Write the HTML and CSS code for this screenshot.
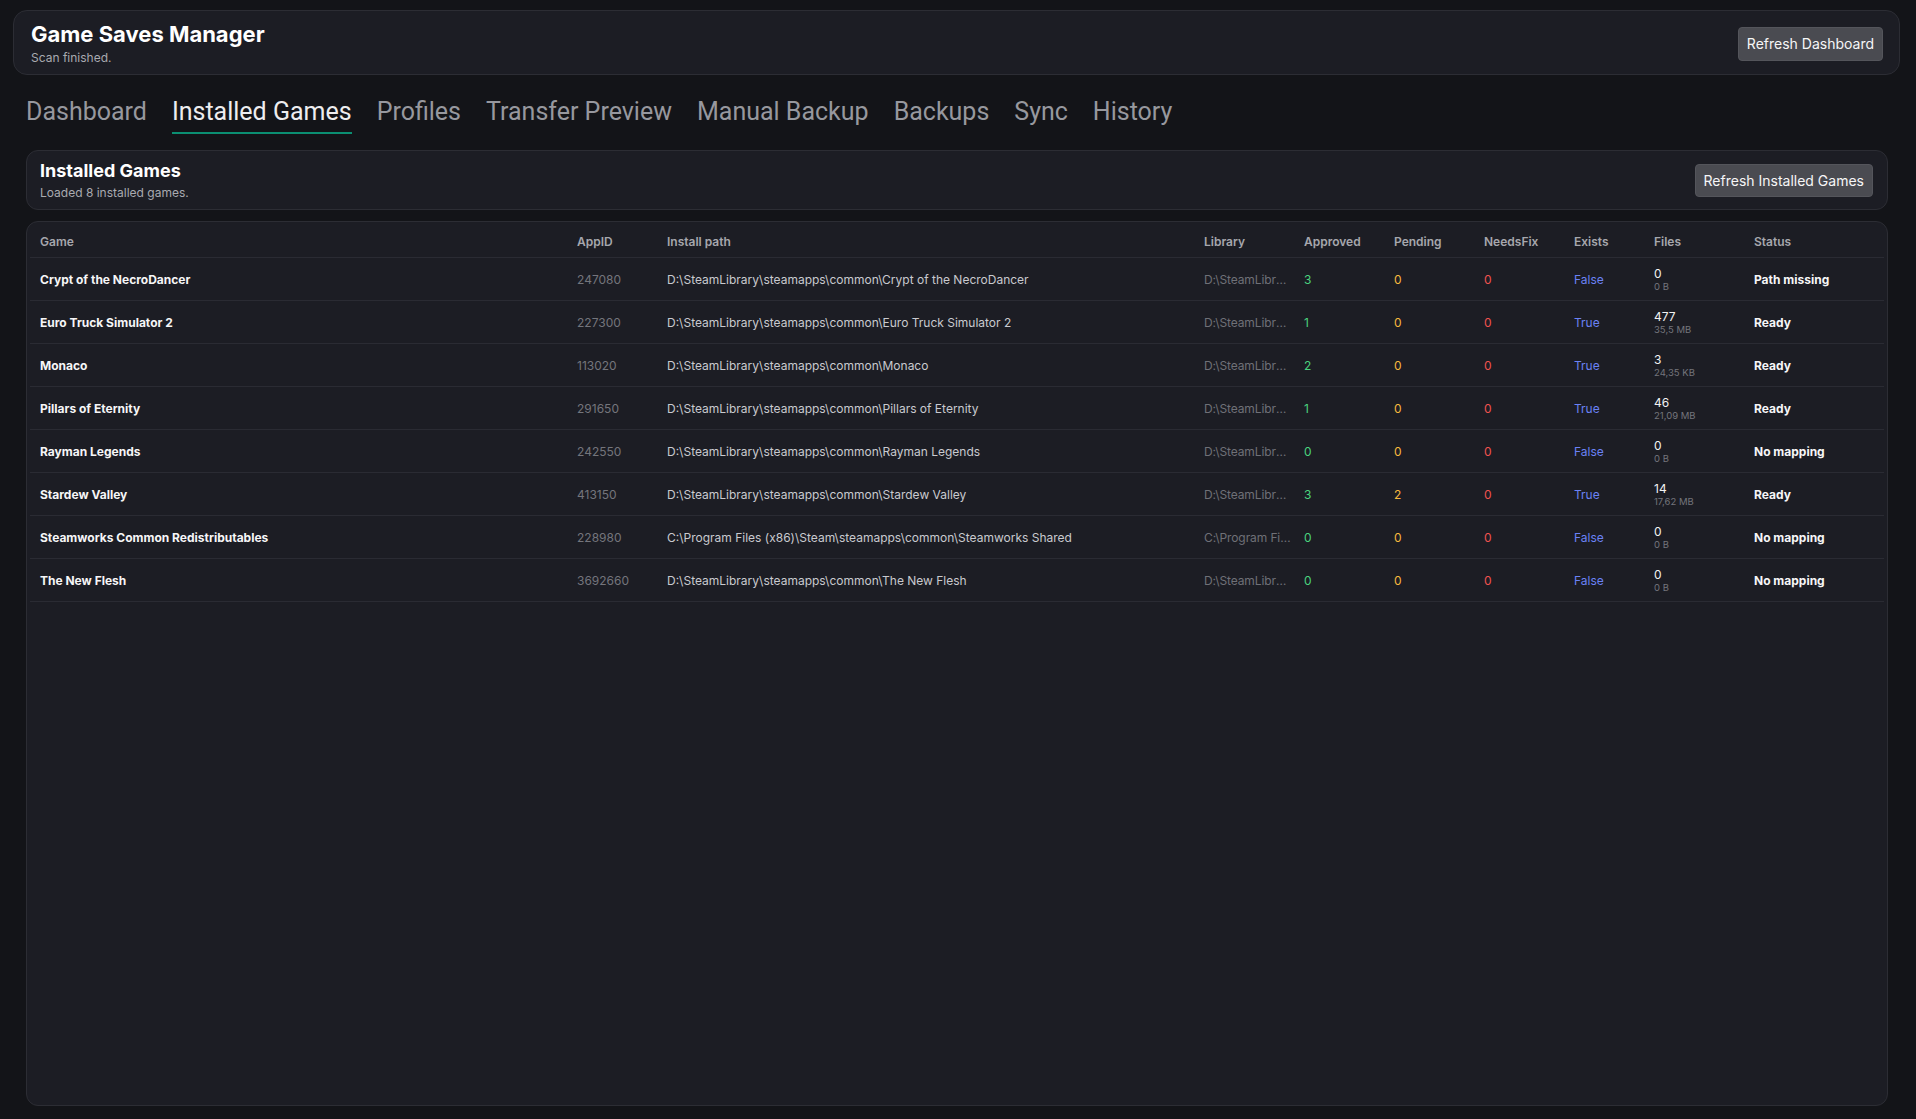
FILE: index.html
```html
<!DOCTYPE html>
<html>
<head>
    <title>Game Saves Manager</title>
    <link rel="stylesheet" href="styles.css">
</head>
<body>
    <div class="app">
        <header class="topbar">
            <div>
                <h1>Game Saves Manager</h1>
                <div class="status">Scan finished.</div>
            </div>
            <button class="btn">Refresh Dashboard</button>
        </header>

        <main class="main">
            <nav class="tabs">
                <a class="tab">Dashboard</a>
                <a class="tab active">Installed Games</a>
                <a class="tab">Profiles</a>
                <a class="tab">Transfer Preview</a>
                <a class="tab">Manual Backup</a>
                <a class="tab">Backups</a>
                <a class="tab">Sync</a>
                <a class="tab">History</a>
            </nav>

            <section class="card panel-head">
                <div>
                    <h2>Installed Games</h2>
                    <div class="status">Loaded 8 installed games.</div>
                </div>
                <button class="btn">Refresh Installed Games</button>
            </section>

            <section class="card table-card">
                <table class="games">
                    <colgroup>
                        <col>
                        <col style="width: 90px">
                        <col>
                        <col style="width: 100px">
                        <col style="width: 90px">
                        <col style="width: 90px">
                        <col style="width: 90px">
                        <col style="width: 80px">
                        <col style="width: 100px">
                        <col style="width: 140px">
                    </colgroup>
                    <thead>
                        <tr>
                            <th>Game</th>
                            <th>AppID</th>
                            <th>Install path</th>
                            <th>Library</th>
                            <th>Approved</th>
                            <th>Pending</th>
                            <th>NeedsFix</th>
                            <th>Exists</th>
                            <th>Files</th>
                            <th>Status</th>
                        </tr>
                    </thead>
                    <tbody>
                        <tr>
                            <td class="name">Crypt of the NecroDancer</td>
                            <td class="muted">247080</td>
                            <td class="path">D:\SteamLibrary\steamapps\common\Crypt of the NecroDancer</td>
                            <td class="lib"><span>D:\SteamLibrary</span></td>
                            <td class="ok">3</td>
                            <td class="warn">0</td>
                            <td class="bad">0</td>
                            <td class="bool">False</td>
                            <td class="files">0<small>0 B</small></td>
                            <td class="state">Path missing</td>
                        </tr>
                        <tr>
                            <td class="name">Euro Truck Simulator 2</td>
                            <td class="muted">227300</td>
                            <td class="path">D:\SteamLibrary\steamapps\common\Euro Truck Simulator 2</td>
                            <td class="lib"><span>D:\SteamLibrary</span></td>
                            <td class="ok">1</td>
                            <td class="warn">0</td>
                            <td class="bad">0</td>
                            <td class="bool">True</td>
                            <td class="files">477<small>35,5 MB</small></td>
                            <td class="state">Ready</td>
                        </tr>
                        <tr>
                            <td class="name">Monaco</td>
                            <td class="muted">113020</td>
                            <td class="path">D:\SteamLibrary\steamapps\common\Monaco</td>
                            <td class="lib"><span>D:\SteamLibrary</span></td>
                            <td class="ok">2</td>
                            <td class="warn">0</td>
                            <td class="bad">0</td>
                            <td class="bool">True</td>
                            <td class="files">3<small>24,35 KB</small></td>
                            <td class="state">Ready</td>
                        </tr>
                        <tr>
                            <td class="name">Pillars of Eternity</td>
                            <td class="muted">291650</td>
                            <td class="path">D:\SteamLibrary\steamapps\common\Pillars of Eternity</td>
                            <td class="lib"><span>D:\SteamLibrary</span></td>
                            <td class="ok">1</td>
                            <td class="warn">0</td>
                            <td class="bad">0</td>
                            <td class="bool">True</td>
                            <td class="files">46<small>21,09 MB</small></td>
                            <td class="state">Ready</td>
                        </tr>
                        <tr>
                            <td class="name">Rayman Legends</td>
                            <td class="muted">242550</td>
                            <td class="path">D:\SteamLibrary\steamapps\common\Rayman Legends</td>
                            <td class="lib"><span>D:\SteamLibrary</span></td>
                            <td class="ok">0</td>
                            <td class="warn">0</td>
                            <td class="bad">0</td>
                            <td class="bool">False</td>
                            <td class="files">0<small>0 B</small></td>
                            <td class="state">No mapping</td>
                        </tr>
                        <tr>
                            <td class="name">Stardew Valley</td>
                            <td class="muted">413150</td>
                            <td class="path">D:\SteamLibrary\steamapps\common\Stardew Valley</td>
                            <td class="lib"><span>D:\SteamLibrary</span></td>
                            <td class="ok">3</td>
                            <td class="warn">2</td>
                            <td class="bad">0</td>
                            <td class="bool">True</td>
                            <td class="files">14<small>17,62 MB</small></td>
                            <td class="state">Ready</td>
                        </tr>
                        <tr>
                            <td class="name">Steamworks Common Redistributables</td>
                            <td class="muted">228980</td>
                            <td class="path">C:\Program Files (x86)\Steam\steamapps\common\Steamworks Shared</td>
                            <td class="lib"><span>C:\Program Files (x86)\Steam</span></td>
                            <td class="ok">0</td>
                            <td class="warn">0</td>
                            <td class="bad">0</td>
                            <td class="bool">False</td>
                            <td class="files">0<small>0 B</small></td>
                            <td class="state">No mapping</td>
                        </tr>
                        <tr>
                            <td class="name">The New Flesh</td>
                            <td class="muted">3692660</td>
                            <td class="path">D:\SteamLibrary\steamapps\common\The New Flesh</td>
                            <td class="lib"><span>D:\SteamLibrary</span></td>
                            <td class="ok">0</td>
                            <td class="warn">0</td>
                            <td class="bad">0</td>
                            <td class="bool">False</td>
                            <td class="files">0<small>0 B</small></td>
                            <td class="state">No mapping</td>
                        </tr>
                    </tbody>
                </table>
            </section>
        </main>
    </div>
</body>
</html>
```

FILE: styles.css
```css
html, body { margin: 0; height: 100%; }
body { background: #131418; color: #e8e8ea; font-family: Inter, "Liberation Sans", sans-serif; }

.app { height: 100%; box-sizing: border-box; padding: 10px 16px 13px 13px; display: flex; flex-direction: column; }

.card { background: #1c1d24; border: 1px solid #2c2d34; border-radius: 12px; }

.topbar { display: flex; align-items: center; justify-content: space-between; padding: 10px 16px 8px 17px; background: #1c1d24; border: 1px solid #2c2d34; border-radius: 14px; }
.topbar h1 { margin: 0 0 3px; font-size: 22px; line-height: 26px; font-weight: 700; color: #fff; }
.status { font-size: 12px; line-height: 16px; color: #a9aab0; }

.btn { font-family: Inter, "Liberation Sans", sans-serif; font-size: 14px; color: #f6f6f7; background: #4a4b51; border: 1px solid #54555b; border-radius: 4px; padding: 0 8px; height: 34px; cursor: pointer; }

.main { flex: 1; display: flex; flex-direction: column; padding: 0 12px 0 13px; min-height: 0; }

.tabs { display: flex; gap: 25px; margin: 22px 0 16px; }
.tab { font-family: Roboto, sans-serif; font-size: 25px; line-height: 30px; color: #97989e; padding-bottom: 5px; border-bottom: 2px solid transparent; cursor: pointer; }
.tab.active { color: #ededef; border-bottom-color: #0b8f72; }

.panel-head { display: flex; align-items: center; justify-content: space-between; padding: 9px 14px 8px 13px; }
.panel-head h2 { margin: 0 0 3px; font-size: 18px; line-height: 22px; font-weight: 700; color: #fff; }
.panel-head .btn { height: 33px; }

.table-card { flex: 1; margin-top: 11px; padding: 4px 3px 3px; }

.games { width: 100%; table-layout: fixed; border-collapse: collapse; font-size: 12px; }
.games th { text-align: left; font-weight: 600; color: #a6a7ad; height: 31px; padding: 0 10px; border-bottom: 1px solid #2a2b33; }
.games td { height: 42px; padding: 0 10px; border-bottom: 1px solid #2a2b33; white-space: nowrap; }
.games .name { font-weight: 700; color: #f6f6f7; }
.games .muted { color: #74757c; }
.games .path { color: #c9cacf; overflow: hidden; text-overflow: ellipsis; }
.games .lib { padding-right: 2px; }
.games .lib span { display: block; overflow: hidden; text-overflow: ellipsis; color: #6f7077; letter-spacing: -0.1px; }
.games .ok { color: #4ad37e; }
.games .warn { color: #f7b93e; }
.games .bad { color: #f0524f; }
.games .bool { color: #6b82f5; }
.games .files { color: #f2f2f3; line-height: 14px; }
.games .files small { display: block; font-size: 9.5px; line-height: 11px; color: #74757c; }
.games .state { font-weight: 700; color: #f6f6f7; }
```
